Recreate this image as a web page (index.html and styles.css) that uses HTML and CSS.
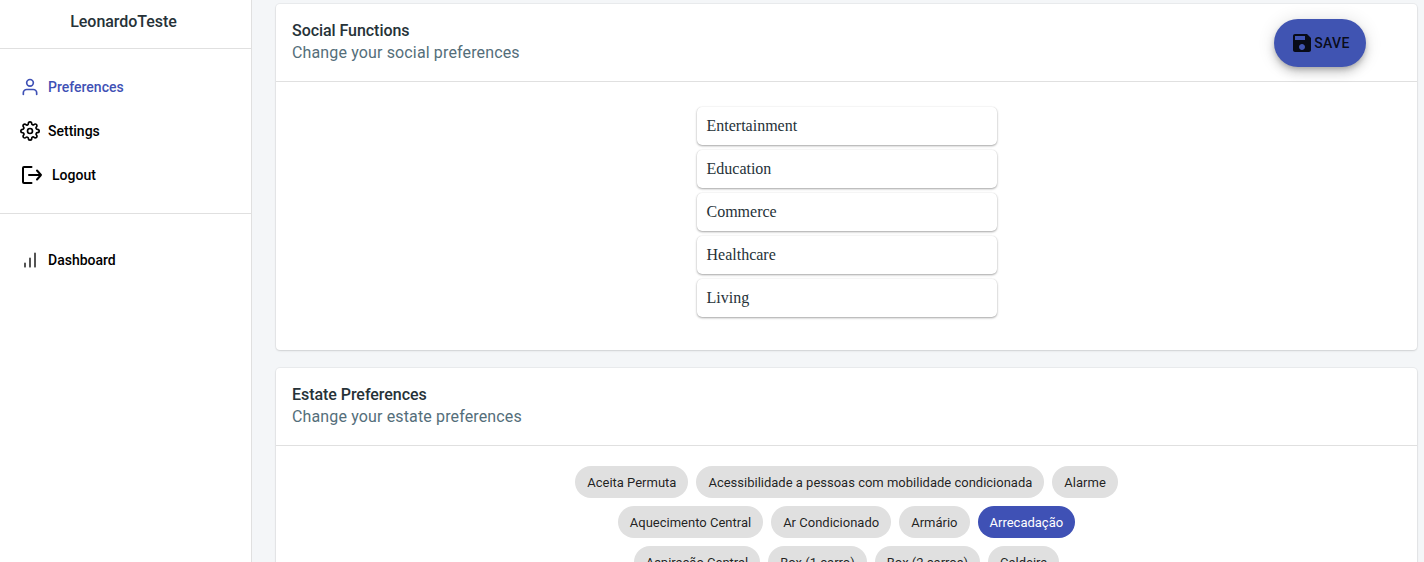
FILE: index.html
```html
<!DOCTYPE html>
<html lang="en">
<head>
<meta charset="utf-8">
<title>Preferences</title>
<link rel="stylesheet" href="styles.css">
</head>
<body>
<div class="layout">
  <aside class="sidebar">
    <div class="user-name">LeonardoTeste</div>
    <nav class="nav">
      <a class="nav-item active">
        <svg class="icon" viewBox="0 0 24 24"><path d="M20 21v-2a4 4 0 0 0-4-4H8a4 4 0 0 0-4 4v2"/><circle cx="12" cy="7" r="4"/></svg>
        <span>Preferences</span>
      </a>
      <a class="nav-item">
        <svg class="icon" viewBox="0 0 24 24"><circle cx="12" cy="12" r="3"/><path d="M19.4 15a1.65 1.65 0 0 0 .33 1.82l.06.06a2 2 0 0 1 0 2.83 2 2 0 0 1-2.83 0l-.06-.06a1.65 1.65 0 0 0-1.82-.33 1.65 1.65 0 0 0-1 1.51V21a2 2 0 0 1-2 2 2 2 0 0 1-2-2v-.09A1.65 1.65 0 0 0 9 19.4a1.65 1.65 0 0 0-1.82.33l-.06.06a2 2 0 0 1-2.83 0 2 2 0 0 1 0-2.83l.06-.06a1.65 1.65 0 0 0 .33-1.82 1.65 1.65 0 0 0-1.51-1H3a2 2 0 0 1-2-2 2 2 0 0 1 2-2h.09A1.65 1.65 0 0 0 4.6 9a1.65 1.65 0 0 0-.33-1.82l-.06-.06a2 2 0 0 1 0-2.83 2 2 0 0 1 2.83 0l.06.06a1.65 1.65 0 0 0 1.82.33H9a1.65 1.65 0 0 0 1-1.51V3a2 2 0 0 1 2-2 2 2 0 0 1 2 2v.09a1.65 1.65 0 0 0 1 1.51 1.65 1.65 0 0 0 1.82-.33l.06-.06a2 2 0 0 1 2.83 0 2 2 0 0 1 0 2.83l-.06.06a1.65 1.65 0 0 0-.33 1.82V9a1.65 1.65 0 0 0 1.51 1H21a2 2 0 0 1 2 2 2 2 0 0 1-2 2h-.09a1.65 1.65 0 0 0-1.51 1z"/></svg>
        <span>Settings</span>
      </a>
      <a class="nav-item">
        <svg class="icon icon-logout" viewBox="0 0 24 24"><path d="M11.500 4H4a1 1 0 0 0-1 1v14a1 1 0 0 0 1 1h7.500M9 12h12M17 7.500L21 12l-4 4.500"/></svg>
        <span>Logout</span>
      </a>
    </nav>
    <nav class="nav nav-secondary">
      <a class="nav-item">
        <svg class="icon icon-muted" viewBox="0 0 24 24"><path d="M12 20V10M18 20V4M6 20v-4"/></svg>
        <span>Dashboard</span>
      </a>
    </nav>
  </aside>
  <main class="content">
    <section class="card card-social">
      <header class="card-header">
        <div>
          <h2 class="card-title">Social Functions</h2>
          <p class="card-subtitle">Change your social preferences</p>
        </div>
        <button class="save" type="button">
          <svg class="save-icon" viewBox="0 0 24 24"><path d="M17 3H5c-1.110 0-2 .9-2 2v14c0 1.100.89 2 2 2h14c1.100 0 2-.9 2-2V7l-4-4zm-5 16c-1.660 0-3-1.340-3-3s1.340-3 3-3 3 1.340 3 3-1.340 3-3 3zm3-10H5V5h10v4z"/></svg>
          <span>SAVE</span>
        </button>
      </header>
      <ul class="functions">
        <li class="function">Entertainment</li>
        <li class="function">Education</li>
        <li class="function">Commerce</li>
        <li class="function">Healthcare</li>
        <li class="function">Living</li>
      </ul>
    </section>
    <section class="card">
      <header class="card-header">
        <div>
          <h2 class="card-title">Estate Preferences</h2>
          <p class="card-subtitle">Change your estate preferences</p>
        </div>
      </header>
      <div class="chips">
        <div class="chip-row">
          <span class="chip">Aceita Permuta</span>
          <span class="chip">Acessibilidade a pessoas com mobilidade condicionada</span>
          <span class="chip">Alarme</span>
        </div>
        <div class="chip-row">
          <span class="chip">Aquecimento Central</span>
          <span class="chip">Ar Condicionado</span>
          <span class="chip">Armário</span>
          <span class="chip selected">Arrecadação</span>
        </div>
        <div class="chip-row">
          <span class="chip">Aspiração Central</span>
          <span class="chip">Box (1 carro)</span>
          <span class="chip">Box (2 carros)</span>
          <span class="chip">Caldeira</span>
        </div>
      </div>
    </section>
  </main>
</div>
</body>
</html>
```
FILE: styles.css
```css
* { box-sizing: border-box; }

body {
  margin: 0;
  height: 562px;
  overflow: hidden;
  background: #f4f6f8;
  color: #263238;
  font-family: Roboto, "Liberation Sans", sans-serif;
}

.layout { display: flex; height: 562px; }

.sidebar {
  flex: none;
  width: 252px;
  background: #fff;
  border-right: 1px solid #e0e0e0;
}

.user-name {
  height: 49px;
  padding: 13px 4px 0 0;
  border-bottom: 1px solid #e0e0e0;
  text-align: center;
  font-size: 16px;
  font-weight: 500;
  line-height: 18px;
  letter-spacing: -0.05px;
}

.nav { padding: 16px 16px 16px 20px; border-bottom: 1px solid #e0e0e0; }
.nav-secondary { padding-top: 24px; border-bottom: 0; }

.nav-item {
  display: flex;
  align-items: center;
  gap: 8px;
  height: 44px;
  color: #000;
  font-size: 14px;
  font-weight: 500;
}
.nav-item.active { color: #3f51b5; }

.icon {
  flex: none;
  width: 20px;
  height: 20px;
  fill: none;
  stroke: currentColor;
  stroke-width: 2;
  stroke-linecap: round;
  stroke-linejoin: round;
}
.icon-logout { width: 24px; height: 24px; }
.icon-muted { stroke: #333; }

.content {
  flex: 1;
  display: flex;
  flex-direction: column;
  gap: 18px;
  padding: 4px 7px 0 24px;
}

.card {
  flex: none;
  background: #fff;
  border-radius: 4px;
  box-shadow: 0 0 0 1px rgba(63, 63, 68, 0.05), 0 1px 2px 0 rgba(63, 63, 68, 0.15);
}
.card-social { height: 346px; }

.card-header {
  display: flex;
  justify-content: space-between;
  align-items: flex-start;
  height: 78px;
  padding: 16px 51px 0 16px;
  border-bottom: 1px solid #e0e0e0;
}

.card-title, .card-subtitle { margin: 0; font-size: 16px; line-height: 22px; }
.card-title { font-weight: 500; letter-spacing: -0.05px; }
.card-subtitle { color: #546e7a; letter-spacing: 0.14px; }

.save {
  display: flex;
  align-items: center;
  justify-content: center;
  width: 92px;
  height: 48px;
  margin-top: -1px;
  padding: 0;
  border: 0;
  border-radius: 24px;
  background: #4054b2;
  color: rgba(0, 0, 0, 0.87);
  font: 500 14px Roboto, sans-serif;
  letter-spacing: 0.4px;
  box-shadow: 0 3px 5px -1px rgba(0, 0, 0, 0.2), 0 6px 10px 0 rgba(0, 0, 0, 0.14), 0 1px 18px 0 rgba(0, 0, 0, 0.12);
}
.save-icon { width: 24px; height: 24px; fill: currentColor; }

.functions {
  display: flex;
  flex-direction: column;
  align-items: center;
  gap: 5px;
  margin: 0;
  padding: 25px 0 0;
  list-style: none;
}
.function {
  width: 300px;
  height: 38px;
  padding: 0 10px;
  border-radius: 5px;
  box-shadow: 0 0 1px rgba(0, 0, 0, 0.12), 0 1px 3px rgba(0, 0, 0, 0.12), 0 1px 2px rgba(0, 0, 0, 0.24);
  font: 16px/38px "Liberation Serif", serif;
}

.chips { display: flex; flex-direction: column; gap: 8px; padding-top: 20px; }
.chip-row { display: flex; justify-content: center; gap: 8px; }
.chip {
  height: 32px;
  padding: 1px 12px 0;
  border-radius: 16px;
  background: #e0e0e0;
  color: rgba(0, 0, 0, 0.87);
  font-size: 13px;
  line-height: 32px;
  white-space: nowrap;
}
.chip.selected { background: #3f51b5; color: #fff; }
```
